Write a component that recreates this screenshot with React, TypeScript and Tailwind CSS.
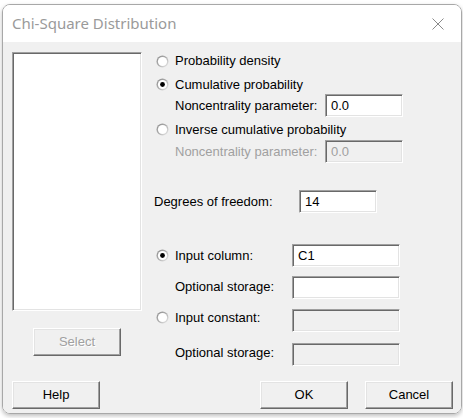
import React from "react";

const font = { fontFamily: '"Liberation Sans", Arial, sans-serif' };

function Radio({ checked }: { checked?: boolean }) {
  return (
    <svg width="13" height="13" viewBox="0 0 13 13" className="shrink-0">
      <defs>
        <linearGradient id="rg" x1="0" y1="0" x2="1" y2="1">
          <stop offset="0" stopColor="#8a8a8a" />
          <stop offset="0.55" stopColor="#b5b5b5" />
          <stop offset="1" stopColor="#f2f2f2" />
        </linearGradient>
      </defs>
      <circle cx="6.5" cy="6.5" r="6" fill="url(#rg)" />
      <circle cx="6.5" cy="6.5" r="4.6" fill="#ffffff" />
      {checked && <circle cx="6.5" cy="6.5" r="2.4" fill="#000000" />}
    </svg>
  );
}

function Field({
  w,
  value,
  disabled,
}: {
  w: string;
  value?: string;
  disabled?: boolean;
}) {
  return (
    <div
      className={`${w} h-[23px] shrink-0 flex items-center pl-[5px] border border-t-[#a0a0a0] border-l-[#a0a0a0] border-b-white border-r-white shadow-[inset_1px_1px_0_#696969,inset_-1px_-1px_0_#e3e3e3] ${
        disabled ? "bg-[#f0f0f0] text-[#a0a0a0]" : "bg-white text-black"
      }`}
    >
      {value}
    </div>
  );
}

function Btn({
  label,
  disabled,
  className = "",
}: {
  label: string;
  disabled?: boolean;
  className?: string;
}) {
  return (
    <div
      className={`w-[88px] h-[28px] flex items-center justify-center bg-[#f0f0f0] border border-t-white border-l-white border-b-[#696969] border-r-[#696969] shadow-[inset_-1px_-1px_0_#a0a0a0,inset_1px_1px_0_#e3e3e3] ${
        disabled
          ? "text-[#a0a0a0] [text-shadow:1px_1px_0_#ffffff]"
          : "text-black"
      } ${className}`}
    >
      {label}
    </div>
  );
}

export default function App() {
  return (
    <div className="w-[463px] h-[418px] bg-white pl-[2px] pt-[4px]" style={font}>
      <div className="w-[460px] h-[410px] rounded-[8px] border border-[#a8a8a8] overflow-hidden flex flex-col shadow-[0_2px_4px_rgba(0,0,0,0.25)] text-[13px] text-black">
        {/* Title bar */}
        <div className="h-[37px] shrink-0 bg-white flex items-center justify-between pl-[9px] pr-[17px]">
          <span
            className="text-[15px] text-[#9a9a9a] pb-[1px]"
            style={{ fontFamily: '"Noto Sans", "Open Sans", sans-serif' }}
          >
            Chi-Square Distribution
          </span>
          <svg width="12" height="12" viewBox="0 0 12 12">
            <path d="M0.5 0.5L11.5 11.5M11.5 0.5L0.5 11.5" stroke="#8a8a8a" strokeWidth="1" />
          </svg>
        </div>

        {/* Body */}
        <div className="flex-1 bg-[#f0f0f0] flex flex-col">
          <div className="flex">
            {/* Left column */}
            <div className="pl-[9px] flex flex-col">
              <div className="mt-[10px] w-[130px] h-[259px] bg-white border border-t-[#a0a0a0] border-l-[#a0a0a0] border-b-white border-r-white shadow-[inset_1px_1px_0_#696969,inset_-1px_-1px_0_#e3e3e3]" />
              <Btn label="Select" disabled className="mt-[17px] ml-[21px]" />
            </div>

            {/* Right column */}
            <div className="ml-[12px] flex flex-col">
              <div className="mt-[8px] h-[22px] flex items-center pl-[2px] gap-[6px]">
                <Radio />
                <span>Probability density</span>
              </div>
              <div className="h-[22px] flex items-center pl-[2px] gap-[6px] pt-[3px]">
                <Radio checked />
                <span>Cumulative probability</span>
              </div>
              <div className="flex items-center pl-[21px]">
                <span className="w-[150px]">Noncentrality parameter:</span>
                <Field w="w-[78px]" value="0.0" />
              </div>
              <div className="h-[23px] flex items-center pl-[2px] gap-[6px] pt-[2px]">
                <Radio />
                <span>Inverse cumulative probability</span>
              </div>
              <div className="flex items-center pl-[21px]">
                <span className="w-[150px] text-[#a0a0a0]">Noncentrality parameter:</span>
                <Field w="w-[78px]" value="0.0" disabled />
              </div>

              <div className="mt-[27px] flex items-center">
                <span className="w-[145px]">Degrees of freedom:</span>
                <Field w="w-[78px]" value="14" />
              </div>

              <div className="mt-[31px] flex items-center">
                <div className="w-[138px] flex items-center pl-[2px] gap-[6px]">
                  <Radio checked />
                  <span>Input column:</span>
                </div>
                <Field w="w-[108px]" value="C1" />
              </div>
              <div className="mt-[9px] flex items-center">
                <span className="w-[138px] pl-[21px] pb-[2px]">Optional storage:</span>
                <Field w="w-[108px]" />
              </div>
              <div className="mt-[9px] flex items-center">
                <div className="w-[138px] flex items-center pl-[2px] gap-[6px] pb-[6px]">
                  <Radio />
                  <span>Input constant:</span>
                </div>
                <Field w="w-[108px]" disabled />
              </div>
              <div className="mt-[9px] flex items-center">
                <span className="w-[138px] pl-[21px] pb-[2px]">Optional storage:</span>
                <Field w="w-[108px]" disabled />
              </div>
            </div>
          </div>

          {/* Footer buttons */}
          <div className="mt-[15px] flex pl-[9px] pr-[8px]">
            <Btn label="Help" />
            <div className="flex-1" />
            <Btn label="OK" />
            <Btn label="Cancel" className="ml-[17px]" />
          </div>
        </div>
      </div>
    </div>
  );
}
